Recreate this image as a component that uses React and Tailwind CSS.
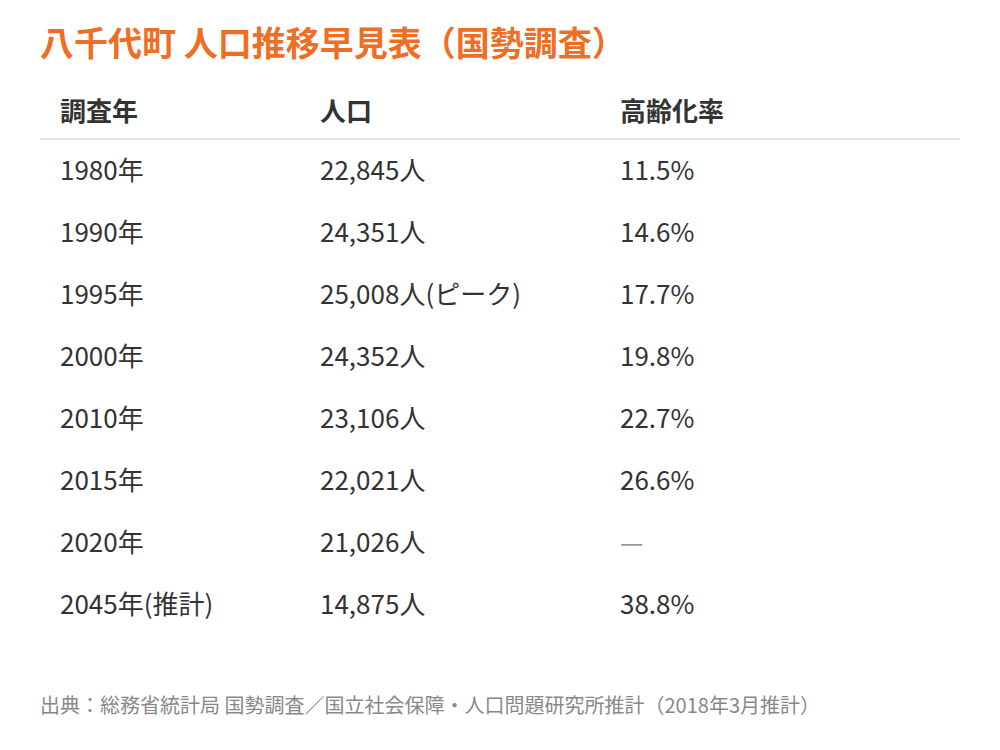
import React from 'react';

const rows = [
  ['1980年', '22,845人', '11.5%'],
  ['1990年', '24,351人', '14.6%'],
  ['1995年', '25,008人(ピーク)', '17.7%'],
  ['2000年', '24,352人', '19.8%'],
  ['2010年', '23,106人', '22.7%'],
  ['2015年', '22,021人', '26.6%'],
  ['2020年', '21,026人', null],
  ['2045年(推計)', '14,875人', '38.8%'],
];

const App = () => {
  return (
    <div
      className="w-[1000px] h-[750px] bg-white px-10 pt-5"
      style={{ fontFamily: '"Noto Sans CJK JP", "Noto Sans", sans-serif' }}
    >
      {/* Title */}
      <h1 className="text-[34px] leading-[44px] font-bold text-[#ee6e25]">
        八千代町 人口推移早見表（国勢調査）
      </h1>

      {/* Table */}
      <table className="w-full mt-[17px] border-collapse text-[#333]">
        <thead>
          <tr className="border-b-2 border-[#e3e3e3]">
            <th className="w-[260px] h-[58px] pl-5 text-left text-[26px] font-bold">調査年</th>
            <th className="w-[300px] h-[58px] pl-5 text-left text-[26px] font-bold">人口</th>
            <th className="h-[58px] pl-5 text-left text-[26px] font-bold">高齢化率</th>
          </tr>
        </thead>
        <tbody>
          {rows.map(([year, pop, rate]) => (
            <tr key={year}>
              <td className="h-[62px] pl-5 pb-1 text-[26px]">{year}</td>
              <td className="h-[62px] pl-5 pb-1 text-[26px]">{pop}</td>
              <td className="h-[62px] pl-5 pb-1 text-[26px]">
                {rate ? rate : <span className="text-[#999]">—</span>}
              </td>
            </tr>
          ))}
        </tbody>
      </table>

      {/* Source */}
      <p className="mt-[55px] text-[20px] leading-[30px] text-[#888]">
        出典：総務省統計局 国勢調査／国立社会保障・人口問題研究所推計（2018年3月推計）
      </p>
    </div>
  );
};

export default App;
